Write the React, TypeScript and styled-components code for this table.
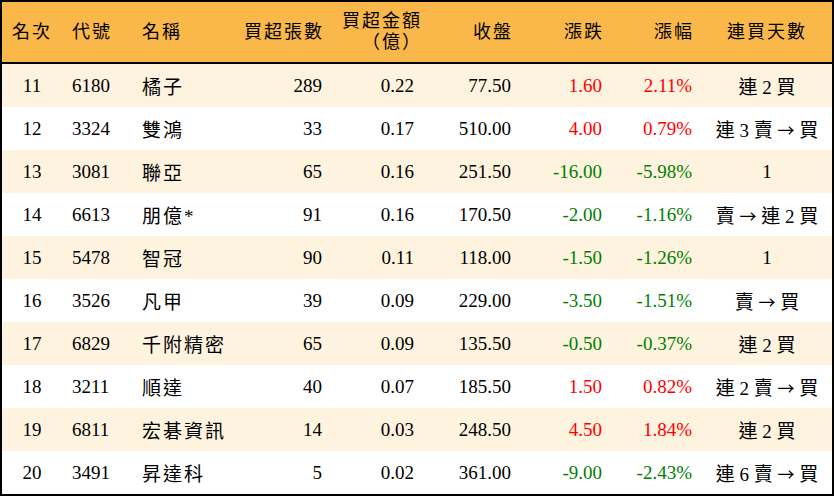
import styled, { createGlobalStyle } from "styled-components";

const GlobalStyle = createGlobalStyle`
  html, body {
    margin: 0;
    padding: 0;
    background: #fff;
  }
  body {
    font-family: "Liberation Serif", "Noto Sans CJK TC", serif;
    color: #000;
  }
`;

const COLUMNS = "60px 70px 100px 100px 92px 97px 91px 90px 130px";

const Table = styled.div`
  width: 834px;
  height: 496px;
  box-sizing: border-box;
  border: 2px solid #000;
  display: flex;
  flex-direction: column;
`;

const HeaderRow = styled.div`
  display: grid;
  grid-template-columns: ${COLUMNS};
  height: 62px;
  box-sizing: border-box;
  background: #fab84b;
  border-bottom: 2px solid #000;
`;

const Row = styled.div<{ $odd: boolean }>`
  display: grid;
  grid-template-columns: ${COLUMNS};
  height: 43px;
  background: ${(p) => (p.$odd ? "#fef3df" : "#fff")};
`;

type Align = "left" | "center" | "right";

const Cell = styled.div<{ $align: Align; $tone?: "up" | "down" }>`
  display: flex;
  align-items: center;
  justify-content: ${(p) =>
    p.$align === "left" ? "flex-start" : p.$align === "right" ? "flex-end" : "center"};
  padding: ${(p) =>
    p.$align === "left" ? "0 0 0 10px" : p.$align === "right" ? "0 10px 0 0" : "0"};
  font-size: 19px;
  white-space: pre;
  color: ${(p) => (p.$tone === "up" ? "#ff0000" : p.$tone === "down" ? "#008000" : "#000")};
`;

const HeadCell = styled(Cell)<{ $tight?: boolean }>`
  font-size: 18px;
  letter-spacing: 2px;
  line-height: 21px;
  text-align: ${(p) => p.$align};
  padding-right: ${(p) => (p.$tight ? "2px" : p.$align === "right" ? "8px" : "0")};
  white-space: normal;
`;

const HeadText = styled.span`
  white-space: pre-line;
`;

const Name = styled.span`
  letter-spacing: 2px;
`;

const Arrow = styled.span`
  font-family: "Noto Sans CJK TC", sans-serif;
  font-size: 17px;
`;

const headers: { label: string; align: Align; tight?: boolean }[] = [
  { label: "名次", align: "center" },
  { label: "代號", align: "left" },
  { label: "名稱", align: "left" },
  { label: "買超張數", align: "right" },
  { label: "買超金額\n（億）", align: "right", tight: true },
  { label: "收盤", align: "right" },
  { label: "漲跌", align: "right" },
  { label: "漲幅", align: "right" },
  { label: "連買天數", align: "center" },
];

const rows = [
  ["11", "6180", "橘子", "289", "0.22", "77.50", "1.60", "2.11%", "連 2 買"],
  ["12", "3324", "雙鴻", "33", "0.17", "510.00", "4.00", "0.79%", "連 3 賣 → 買"],
  ["13", "3081", "聯亞", "65", "0.16", "251.50", "-16.00", "-5.98%", "1"],
  ["14", "6613", "朋億*", "91", "0.16", "170.50", "-2.00", "-1.16%", "賣 → 連 2 買"],
  ["15", "5478", "智冠", "90", "0.11", "118.00", "-1.50", "-1.26%", "1"],
  ["16", "3526", "凡甲", "39", "0.09", "229.00", "-3.50", "-1.51%", "賣 → 買"],
  ["17", "6829", "千附精密", "65", "0.09", "135.50", "-0.50", "-0.37%", "連 2 買"],
  ["18", "3211", "順達", "40", "0.07", "185.50", "1.50", "0.82%", "連 2 賣 → 買"],
  ["19", "6811", "宏碁資訊", "14", "0.03", "248.50", "4.50", "1.84%", "連 2 買"],
  ["20", "3491", "昇達科", "5", "0.02", "361.00", "-9.00", "-2.43%", "連 6 賣 → 買"],
];

const Streak = ({ text }: { text: string }) => {
  const parts = text.split("→");
  return (
    <>
      {parts.map((p, i) => (
        <span key={i}>
          {i > 0 && <Arrow>→</Arrow>}
          {p}
        </span>
      ))}
    </>
  );
};

export default function App() {
  return (
    <>
      <GlobalStyle />
      <Table>
        <HeaderRow>
          {headers.map((h) => (
            <HeadCell key={h.label} $align={h.align} $tight={h.tight}>
              <HeadText>{h.label}</HeadText>
            </HeadCell>
          ))}
        </HeaderRow>
        {rows.map((r, i) => {
          const tone = r[6].startsWith("-") ? "down" : "up";
          return (
            <Row key={r[0]} $odd={i % 2 === 0}>
              <Cell $align="center">{r[0]}</Cell>
              <Cell $align="left">{r[1]}</Cell>
              <Cell $align="left">
                <Name>{r[2]}</Name>
              </Cell>
              <Cell $align="right">{r[3]}</Cell>
              <Cell $align="right">{r[4]}</Cell>
              <Cell $align="right">{r[5]}</Cell>
              <Cell $align="right" $tone={tone}>
                {r[6]}
              </Cell>
              <Cell $align="right" $tone={tone}>
                {r[7]}
              </Cell>
              <Cell $align="center">
                <Streak text={r[8]} />
              </Cell>
            </Row>
          );
        })}
      </Table>
    </>
  );
}
